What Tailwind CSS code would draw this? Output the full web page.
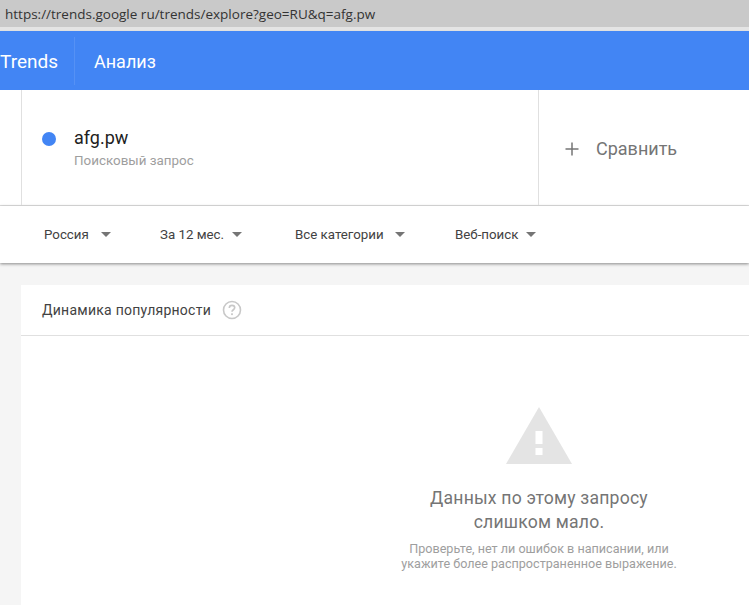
<!DOCTYPE html>
<html lang="ru">
<head>
  <meta charset="UTF-8" />
  <title>Google Trends</title>
  <script src="https://cdn.jsdelivr.net/npm/@tailwindcss/browser@4"></script>
</head>
<body class="h-[605px] w-[749px] overflow-hidden bg-[#f5f5f5] font-['Roboto',sans-serif]">

<!-- Address bar -->
<div class="h-[27px] bg-[#c9c9c9] pl-[5px] pt-[6px] font-['Open_Sans',sans-serif] text-[13.5px] leading-[16px] text-[#333]">https://trends.google ru/trends/explore?geo=RU&amp;q=afg.pw</div>
<div class="h-[4px] bg-[#e4e4e4]"></div>

<!-- Header -->
<header class="flex h-[59px] items-center bg-[#4285f4] text-white shadow-[0_1px_2px_rgba(0,0,0,0.25)]">
  <div class="w-[75px] border-r border-white/10 pt-[7px] pb-[5px] text-[19px] leading-[36px]">Trends</div>
  <div class="pt-[2px] pl-[19px] text-[18px]">Анализ</div>
</header>

<!-- Search terms -->
<section class="flex h-[116px] border-b border-[#e0e0e0] bg-white">
  <div class="ml-[21px] flex w-[518px] border-x border-[#e0e0e0]">
    <span class="mt-[42px] ml-[20px] h-[14px] w-[14px] rounded-full bg-[#4285f4]"></span>
    <div class="ml-[18px] pt-[36px]">
      <div class="text-[18px] leading-[24px] text-[#212121]">afg.pw</div>
      <div class="mt-[1px] text-[13.400px] leading-[20px] text-[#9e9e9e]">Поисковый запрос</div>
    </div>
  </div>
  <div class="flex items-center pt-[2px] pl-[25px] text-[#757575]">
    <svg class="h-[16px] w-[16px]" viewBox="0 0 16 16"><path d="M8 1.500v13M1.500 8h13" stroke="#757575" stroke-width="1.500" fill="none"/></svg>
    <span class="ml-[16px] text-[18px]">Сравнить</span>
  </div>
</section>

<!-- Filters -->
<section class="flex h-[57px] items-center bg-white text-[13.300px] text-[#424242] shadow-[0_1px_3px_rgba(0,0,0,0.45)]">
  <div class="ml-[44px] flex w-[116px] items-center">Россия<span class="ml-[12px] h-0 w-0 border-x-[5px] border-t-[5px] border-x-transparent border-t-[#757575]"></span></div>
  <div class="flex w-[135px] items-center">За 12 мес.<span class="ml-[8px] h-0 w-0 border-x-[5px] border-t-[5px] border-x-transparent border-t-[#757575]"></span></div>
  <div class="flex w-[160px] items-center">Все категории<span class="ml-[11px] h-0 w-0 border-x-[5px] border-t-[5px] border-x-transparent border-t-[#757575]"></span></div>
  <div class="flex items-center">Веб-поиск<span class="ml-[8px] h-0 w-0 border-x-[5px] border-t-[5px] border-x-transparent border-t-[#757575]"></span></div>
</section>

<!-- Interest over time card -->
<section class="mt-[22px] ml-[21px] h-[340px] bg-white">
  <div class="flex h-[51px] items-center border-b border-[#e0e0e0] pl-[21px]">
    <span class="text-[14px] tracking-[0.25px] text-[#424242]">Динамика популярности</span>
    <svg class="ml-[11px] h-[20px] w-[20px]" viewBox="0 0 20 20">
      <circle cx="10" cy="10" r="8.500" fill="none" stroke="#c8c8c8" stroke-width="1.600"/>
      <path d="M7.300 8c0-1.600 1.200-2.600 2.700-2.600s2.700 1 2.700 2.400c0 1.900-2.700 2-2.700 4" fill="none" stroke="#c8c8c8" stroke-width="1.600"/>
      <rect x="9.100" y="13.300" width="1.800" height="1.800" fill="#c8c8c8"/>
    </svg>
  </div>
  <div class="flex flex-col items-center pt-[71px] pl-[310px] pr-[2px] w-[728px]">
    <svg class="h-[57px] w-[66px]" viewBox="0 0 66 57">
      <path d="M33 0 66 57H0Z" fill="#e4e4e4"/>
      <rect x="29.500" y="24" width="7" height="13" fill="#fff"/>
      <rect x="29.500" y="41" width="7" height="7" fill="#fff"/>
    </svg>
    <div class="mt-[22px] whitespace-nowrap text-center text-[17.600px] leading-[24px] tracking-[0.2px] text-[#757575]">Данных по этому запросу<br />слишком мало.</div>
    <div class="mt-[7px] whitespace-nowrap text-center text-[12.600px] leading-[15px] text-[#9e9e9e]">Проверьте, нет ли ошибок в написании, или<br />укажите более распространенное выражение.</div>
  </div>
</section>

</body>
</html>
